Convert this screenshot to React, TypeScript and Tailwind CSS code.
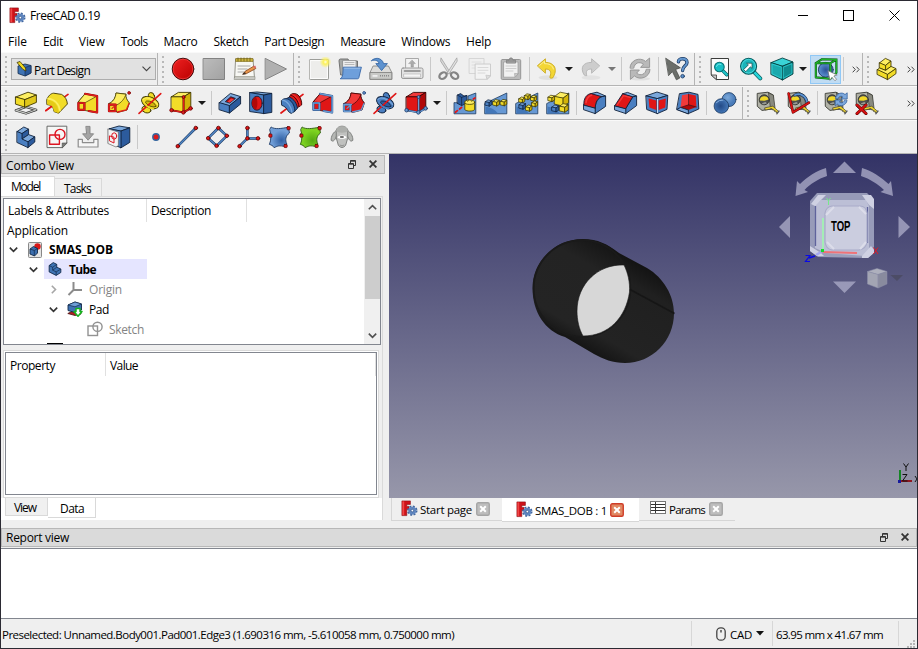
import { useLayoutEffect, useRef, type ReactNode } from "react";

/* ---------- text fitted to a fixed advance width ---------- */
function Label({ w, className = "", children }: { w: number; className?: string; children: string }) {
  const ref = useRef<HTMLSpanElement>(null);
  useLayoutEffect(() => {
    const el = ref.current;
    if (!el) return;
    el.style.letterSpacing = "0px";
    const natural = el.getBoundingClientRect().width;
    el.style.letterSpacing = `${(w - natural) / children.length}px`;
  }, [w, children]);
  return (
    <span ref={ref} className={`inline-block shrink-0 whitespace-pre ${className}`}>
      {children}
    </span>
  );
}

/* ---------- icon helpers ---------- */
const Y = { l: "#fdee62", m: "#f2dc28", d: "#d2b408", s: "#3f3800" };
const B = { l: "#7ba8dc", m: "#4a7fc1", d: "#2c5b9d", s: "#10213c" };
const R = { l: "#f23a3a", m: "#e01616", d: "#b00808", s: "#3a0000" };
type Pal = typeof Y;

function Svg({ children, size = 24 }: { children: ReactNode; size?: number }) {
  return (
    <svg width={size} height={size} viewBox="0 0 24 24" fill="none" strokeLinejoin="round" strokeLinecap="round" className="block shrink-0">
      {children}
    </svg>
  );
}

function Box({ x, y, s, c }: { x: number; y: number; s: number; c: Pal }) {
  const h = s * 0.3;
  return (
    <g stroke={c.s} strokeWidth="0.75">
      <path d={`M${x} ${y + h}L${x + s * 0.4} ${y}L${x + s} ${y + h * 0.4}L${x + s * 0.62} ${y + h * 1.4}Z`} fill={c.l} />
      <path d={`M${x} ${y + h}L${x + s * 0.62} ${y + h * 1.4}V${y + s}L${x} ${y + s * 0.85}Z`} fill={c.m} />
      <path d={`M${x + s * 0.62} ${y + h * 1.4}L${x + s} ${y + h * 0.4}V${y + s * 0.75}L${x + s * 0.62} ${y + s}Z`} fill={c.d} />
    </g>
  );
}

const Dot = ({ x, y, r = 1.8, c = "#e01616", s = "#5c0000" }: { x: number; y: number; r?: number; c?: string; s?: string }) => (
  <circle cx={x} cy={y} r={r} fill={c} stroke={s} strokeWidth="0.8" />
);

/* ---------- application logo ---------- */
const Logo = () => (
  <svg width="17" height="17" viewBox="0 0 17 17" fill="none" className="block shrink-0">
    <path d="M0.9 0.9H9.4V4.4H5.8V6.4H8V9.6H5.8V15.6H0.9Z" fill="#cf1219" stroke="#860b10" strokeWidth="0.6" />
    <path d="M1.4 1.4H3.2V15.2H1.4Z" fill="#ee4646" />
    <circle cx="11.3" cy="10.6" r="3.6" fill="#5f86bf" />
    <circle cx="11.3" cy="10.6" r="4.3" stroke="#41669e" strokeWidth="1.8" strokeDasharray="1.9 1.477" />
    <circle cx="11.3" cy="10.6" r="3.2" stroke="#5f86bf" strokeWidth="1.4" />
    <circle cx="11.3" cy="10.6" r="1.3" fill="#fff" stroke="#34578e" strokeWidth="0.8" />
  </svg>
);

/* ---------- row 1 icons ---------- */
const RecordIcon = () => (
  <Svg>
    <defs><linearGradient id="rec" x1="0" y1="0" x2="1" y2="1"><stop offset="0" stopColor="#f02222" /><stop offset="1" stopColor="#b90000" /></linearGradient></defs>
    <circle cx="12" cy="12" r="10.8" fill="url(#rec)" stroke="#2a0505" strokeWidth="0.9" />
    <circle cx="12" cy="12" r="9.8" stroke="#f24040" strokeWidth="0.7" />
  </Svg>
);
const StopIcon = () => (
  <Svg>
    <defs><linearGradient id="stp" x1="0" y1="0" x2="1" y2="1"><stop offset="0" stopColor="#bcbcbc" /><stop offset="1" stopColor="#a2a2a2" /></linearGradient></defs>
    <rect x="1.5" y="1.5" width="21" height="21" fill="url(#stp)" stroke="#828282" />
  </Svg>
);
const NoteIcon = () => (
  <Svg>
    <path d="M3 2H20L21.5 21H2Z" fill="#f7f7f3" stroke="#8a8a80" strokeWidth="0.9" />
    <path d="M3 1.5H20V4.5H3Z" fill="#c9b23e" stroke="#7c6a18" strokeWidth="0.6" />
    <path d="M5 1v3M8 1v3M11 1v3M14 1v3M17 1v3" stroke="#6b5c10" strokeWidth="0.8" />
    <path d="M5 9H17M5 12H14M5 15H11" stroke="#a8a8a8" strokeWidth="1" />
    <path d="M2 19.6H22V22.5H1.5Z" fill="#c9c9c4" stroke="#8a8a80" strokeWidth="0.6" />
    <path d="M10 17L12 14.4L21 9L22.8 11.5L13.5 16.6Z" fill="#e8964a" stroke="#86431a" strokeWidth="0.8" />
    <path d="M20 9.4L22.2 8.4L23.2 10.6L21.6 11.6Z" fill="#d96a6a" />
    <path d="M10 17L12 15.4L12.4 16.4Z" fill="#222" stroke="#222" strokeWidth="0.5" />
  </Svg>
);
const PlayIcon = () => (
  <Svg><path d="M1.5 1.5L22.5 12L1.5 22.5Z" fill="#b0b0b0" stroke="#858585" /></Svg>
);
const NewIcon = () => (
  <Svg>
    <defs><radialGradient id="glow"><stop offset="0" stopColor="#fffde0" /><stop offset="0.35" stopColor="#fdf25a" /><stop offset="1" stopColor="#fdf25a" stopOpacity="0" /></radialGradient></defs>
    <rect x="2.5" y="2.5" width="19" height="20" rx="0.8" fill="#ededeb" stroke="#9c9d99" />
    <rect x="3.6" y="3.6" width="16.8" height="17.8" stroke="#fff" strokeWidth="0.9" />
    <circle cx="18.4" cy="5" r="6" fill="url(#glow)" />
  </Svg>
);
const OpenIcon = () => (
  <Svg>
    <path d="M1 3.5Q1 2 2.4 2H10L11 4H19.5V18H3Z" fill="#a6a8a6" stroke="#666" strokeWidth="0.9" />
    <path d="M5 3.5H18V12H5Z" fill="#ededed" stroke="#8d8d8d" strokeWidth="0.7" />
    <path d="M7 5.5H16M7 7.5H16" stroke="#aaa" strokeWidth="0.8" />
    <path d="M5.6 10.2H23.4L20.8 20.8Q20.5 21.8 19.4 21.8H2.2Q4.3 21 4.7 18Z" fill="#6e9fdb" stroke="#3767a8" strokeWidth="0.9" />
    <path d="M6.6 11.2H22" stroke="#a9c9ee" strokeWidth="0.8" />
  </Svg>
);
const SaveIcon = () => (
  <Svg>
    <path d="M4.5 9H19.5L22.8 15.5V22.3H1.2V15.5Z" fill="#dcdcda" stroke="#7c7c7a" strokeWidth="0.8" />
    <path d="M1.2 15.5H22.8V22.3H1.2Z" fill="#c8c9c6" stroke="#7c7c7a" strokeWidth="0.8" />
    <path d="M11 18.8H20.5" stroke="#8a8a8a" strokeWidth="1.6" strokeDasharray="1 1" strokeLinecap="butt" />
    <rect x="3.5" y="18" width="5" height="1.8" fill="#eee" />
    <path d="M2.6 3.6C5 0.4 12.6-0.2 14.6 6.6H18.4L12.6 13.6L6.8 6.6H10C9.6 3.8 6.4 2.4 2.6 3.6Z" fill="#5d92cf" stroke="#2f5f9e" strokeWidth="0.8" />
  </Svg>
);
const PrintIcon = () => (
  <Svg>
    <rect x="6" y="1.5" width="12.5" height="11" fill="#f2f2f2" stroke="#a0a0a0" strokeWidth="0.9" />
    <path d="M12.2 3.2L15.4 6.6H13.4V10H11V6.6H9Z" fill="#aaa" stroke="#929292" strokeWidth="0.5" />
    <rect x="1.5" y="11" width="21.5" height="10.5" rx="1.6" fill="#e3e3e3" stroke="#9a9a9a" />
    <path d="M4.5 14H20" stroke="#858585" strokeWidth="1.6" />
    <rect x="4" y="17" width="16.5" height="3.2" fill="#f6f6f6" stroke="#b9b9b9" strokeWidth="0.7" />
  </Svg>
);
const CutIcon = () => (
  <Svg>
    <path d="M4.2 1.2L13.8 16.4L11.8 16.8L3.8 4.4Z" fill="#d8d8d8" stroke="#a2a2a2" strokeWidth="0.8" />
    <path d="M19.6 1.2L10 16.4L12 16.8L20 4.4Z" fill="#e2e2e2" stroke="#a2a2a2" strokeWidth="0.8" />
    <ellipse cx="6" cy="18.6" rx="4" ry="2.9" stroke="#858585" strokeWidth="2.2" transform="rotate(-35 6 18.6)" />
    <ellipse cx="17.6" cy="18.6" rx="4" ry="2.9" stroke="#858585" strokeWidth="2.2" transform="rotate(35 17.6 18.6)" />
  </Svg>
);
const CopyIcon = () => (
  <Svg>
    <g strokeWidth="0.9">
      <rect x="1.5" y="1.5" width="14.5" height="15" fill="#efefef" stroke="#d2d2d2" />
      <path d="M4 5H13M4 8H13M4 11H9" stroke="#dcdcdc" />
      <path d="M7.5 7H22.5V19L19 22.3H7.5Z" fill="#f3f3f3" stroke="#c8c8c8" />
      <path d="M10 10.5H20M10 13.3H20M10 16H17" stroke="#d6d6d6" />
      <path d="M22.5 19L19 22.3L18 18.6Z" fill="#ddd" stroke="#c8c8c8" />
    </g>
  </Svg>
);
const PasteIcon = () => (
  <Svg>
    <rect x="2.2" y="2.5" width="19.5" height="20" rx="1.2" fill="#bababa" stroke="#969696" />
    <path d="M5 5H19V17L16 20.2H5Z" fill="#f1f1f1" stroke="#a2a2a2" strokeWidth="0.8" />
    <path d="M7 9H17M7 11.5H17M7 14H14" stroke="#c9c9c9" strokeWidth="0.9" />
    <path d="M19 17L16 20.2L15.6 16.8Z" fill="#ccc" stroke="#999" strokeWidth="0.6" />
    <path d="M7.5 5.8V3.2H10Q10.3 0.8 12 0.8T14 3.2H16.5V5.8Z" fill="#979797" stroke="#7d7d7d" strokeWidth="0.7" />
  </Svg>
);
const UndoIcon = () => (
  <Svg>
    <ellipse cx="12" cy="20.6" rx="9.5" ry="2.4" fill="#000" opacity="0.06" />
    <path d="M1.6 8.6L9.4 1.8V5.4C18.4 5.4 22.4 12.4 16.6 21C13.6 21.6 13.8 20.6 14 19.4C15.6 15.5 14.6 12 9.4 12V15.8Z" fill="#f3d634" stroke="#c9a91c" strokeWidth="0.9" />
    <path d="M3.6 8.4L8.5 4.2V6.7C13 6.6 16.4 8 17.4 12" stroke="#fdf3a0" strokeWidth="0.9" />
  </Svg>
);
const RedoIcon = () => (
  <Svg>
    <ellipse cx="12" cy="20.6" rx="9.5" ry="2.4" fill="#000" opacity="0.05" />
    <path d="M20.4 8.6L12.6 1.8V5.4C4 5.4 1 10.5 5 17.8Q6.6 19 7.8 18.6C6.6 14.5 7.6 12 12.6 12V15.8Z" fill="#cdcdcd" stroke="#b3b3b3" strokeWidth="0.9" />
  </Svg>
);
const RefreshIcon = () => (
  <Svg>
    <ellipse cx="12" cy="21.8" rx="10" ry="1.8" fill="#000" opacity="0.06" />
    <path d="M2 10.8C2.2 3 12-0.4 17.6 4.4L21.6 1V10.4H12.6L15.4 7.2C11 4 6.5 6.2 5.8 10.8Z" fill="#b9b9b9" stroke="#939393" strokeWidth="0.9" />
    <path d="M22 12.6C21.8 20.4 12 23.6 6.4 19L2.4 22.4V13H11.4L8.6 16.2C13 19.4 17.5 17.2 18.2 12.6Z" fill="#b9b9b9" stroke="#939393" strokeWidth="0.9" />
  </Svg>
);
const WhatsThisIcon = () => (
  <Svg>
    <path d="M13.4 4.8C13.6 0.8 22 0.6 22 5.4C22 9 17.6 8.8 17.6 13.6" stroke="#1b3a64" strokeWidth="3.4" />
    <path d="M13.4 4.8C13.6 0.8 22 0.6 22 5.4C22 9 17.6 8.8 17.6 13.6" stroke="#6396cd" strokeWidth="1.9" />
    <circle cx="17.6" cy="19.2" r="1.8" fill="#5d90c8" stroke="#1b3a64" strokeWidth="0.8" />
    <path d="M1 1.4L15.4 10.8L10.6 12.4L14.8 21L11.4 22.8L7.4 14.6L3.8 18.4Z" fill="#6b6e6a" stroke="#4a4c49" strokeWidth="0.8" />
  </Svg>
);
const FitAllIcon = () => (
  <Svg>
    <path d="M3.5 1.5H20.5V22.5H8.5L3.5 18Z" fill="#fbfbfb" stroke="#3a3c3a" />
    <path d="M3.5 18H8.5V22.5Z" fill="#c9c9c9" stroke="#3a3c3a" strokeWidth="0.8" />
    <path d="M14.5 13.4L18.8 17.8" stroke="#065e60" strokeWidth="3.4" />
    <path d="M14.5 13.4L18.8 17.8" stroke="#1ec4c8" strokeWidth="2.2" />
    <circle cx="11.4" cy="10" r="4.8" fill="#18bfc5" stroke="#067174" strokeWidth="1.1" />
    <path d="M8.4 9.4A3.2 3.2 0 0 1 13 7.4" stroke="#7decee" strokeWidth="1" />
  </Svg>
);
const FitSelIcon = () => (
  <Svg>
    <path d="M15.4 15.4L21.2 21.4" stroke="#0a5a5c" strokeWidth="4" />
    <path d="M15.4 15.4L21.2 21.4" stroke="#26d3d8" strokeWidth="2.7" />
    <circle cx="9.6" cy="9.2" r="8" fill="#19b4ba" stroke="#04595c" strokeWidth="1.1" />
    <circle cx="9.6" cy="9.2" r="6.8" stroke="#4fdade" strokeWidth="0.9" />
    <path d="M4.8 12.4L9.4 7.9L7.6 6.2H13V11.4L11.4 9.8L7 14.4Z" fill="#fff" stroke="#134446" strokeWidth="0.7" />
  </Svg>
);
const IsoIcon = () => (
  <Svg>
    <g stroke="#043f41" strokeWidth="0.9">
      <path d="M1.2 5.6L12.4 1L23 5L12.5 9.2Z" fill="#3ad3d6" />
      <path d="M1.2 5.6L12.5 9.2V23L1.2 17.6Z" fill="#1aa9ad" />
      <path d="M12.5 9.2L23 5V17L12.5 23Z" fill="#0f8b8e" />
    </g>
    <path d="M2.4 7.2L11.4 10V21.2L2.4 16.9Z M13.6 10L21.9 6.7V16.4L13.6 21.2Z" stroke="#35d6da" strokeWidth="0.7" />
  </Svg>
);
const BoundIcon = () => (
  <Svg>
    <defs><radialGradient id="bb"><stop offset="0" stopColor="#2b5299" /><stop offset="1" stopColor="#5e93d2" /></radialGradient></defs>
    <circle cx="11.8" cy="12.8" r="7.4" fill="url(#bb)" stroke="#10264b" strokeWidth="0.8" />
    <g strokeLinecap="square">
      <path d="M1.8 6.2H16.4V21.8L1.8 20.4ZM1.8 6.2L8 2.2L22.4 2.6L16.4 6.2M22.4 2.6V15.8L16.4 21.8" stroke="#0a4a0e" strokeWidth="2.1" />
      <path d="M1.8 6.2H16.4V21.8L1.8 20.4ZM1.8 6.2L8 2.2L22.4 2.6L16.4 6.2M22.4 2.6V15.8L16.4 21.8" stroke="#1db32a" strokeWidth="1.3" />
    </g>
    <path d="M14.2 13.8L23.2 18L19.8 19L22.6 22.4L20.8 23.7L18 20.3L16 23Z" fill="#fff" stroke="#777" strokeWidth="0.7" />
  </Svg>
);
const Steps = ({ c }: { c: Pal }) => (
  <Svg>
    <g stroke={c.s} strokeWidth="0.9">
      <path d="M3.2 6.5L9.8 2L14.6 4.2L8 8.6Z" fill={c.l} />
      <path d="M8 8.6L14.6 4.2V9.6L8 14Z" fill={c.d} />
      <path d="M8 14L14.6 9.6L20.8 11.8L14 16.8Z" fill={c.l} />
      <path d="M14 16.8L20.8 11.8V17L14 22.6Z" fill={c.d} />
      <path d="M3.2 6.5L8 8.6V14L14 16.8V22.6L3.2 17.6Z" fill={c.m} />
    </g>
  </Svg>
);
const PartBlocks = () => (
  <Svg>
    <g stroke={Y.s} strokeWidth="0.85">
      <path d="M4.6 5.8L10.4 1.4L16 4L10.6 8.4Z" fill={Y.l} />
      <path d="M10.6 8.4L16 4V9.4L10.6 13.4Z" fill={Y.m} />
      <path d="M4.6 5.8L10.6 8.4V13.4L4.6 11Z" fill={Y.m} />
      <path d="M2.4 12.6L4.6 11L10.6 13.4L16 9.4L21 11.6L12.6 17.4Z" fill={Y.l} />
      <path d="M2.4 12.6L12.6 17.4V22.6L2.4 17.6Z" fill={Y.m} />
      <path d="M12.6 17.4L21 11.6V16.6L12.6 22.6Z" fill={Y.m} />
    </g>
  </Svg>
);

/* ---------- row 2 icons: additive & subtractive ---------- */
const PadIcon = () => (
  <Svg>
    <path d="M1.8 19.4L12 22.4L22.2 18.8L12 15.8Z" stroke="#333" strokeWidth="2.3" />
    <path d="M1.8 19.4L12 22.4L22.2 18.8L12 15.8Z" stroke="#c7c9c5" strokeWidth="1.1" />
    <g stroke={Y.s} strokeWidth="0.9">
      <path d="M1.8 6L14 1.2L22.4 4L11 8.6Z" fill={Y.l} />
      <path d="M1.8 6L11 8.6V16.2L1.8 13.2Z" fill={Y.m} />
      <path d="M11 8.6L22.4 4V11.4L11 16.2Z" fill="#e0c71a" />
    </g>
  </Svg>
);
const RevolveIcon = () => (
  <Svg>
    <path d="M0.8 19.6L23 3.4" stroke={R.m} strokeWidth="1.7" />
    <path d="M1.8 8.6C3 5.2 5.6 2.4 8.6 2.2L16.6 3.4C20.4 5.6 22 9 22.4 13L13.6 22.2L9 20.6C8.8 17.6 7.4 15.4 5.4 14.2L2.2 13.6Z" fill={Y.m} stroke={Y.s} strokeWidth="0.9" />
    <path d="M9 20.6C8.8 17.6 7.4 15.4 5.4 14.2L2.2 13.6L1.8 8.6C8.6 9 13.4 14 13.6 22.2Z" fill="#e5cb16" />
    <path d="M3 7.6C9.4 8 14.4 13 15 19.8" stroke={Y.l} strokeWidth="1.6" />
    <path d="M0.8 19.6L6.4 15.6" stroke={R.m} strokeWidth="1.7" />
  </Svg>
);
const LoftIcon = ({ c, e, es }: { c: Pal; e: string; es: string }) => (
  <Svg>
    <path d="M2.2 10.8L9 2.8L21.2 5V21.4L9.6 19.6Z" fill={c.m} stroke={c.s} strokeWidth="0.8" />
    <path d="M2.4 10.8L9 2.8L21.2 5L9.6 11.4Z" fill={c.l} stroke={c.s} strokeWidth="0.7" />
    <path d="M9 2.8L21.2 5V21.4L12.6 20" stroke={es} strokeWidth="2" />
    <path d="M9 2.8L21.2 5V21.4L12.6 20" stroke={e} strokeWidth="1.5" />
    <rect x="2.4" y="12" width="6" height="6.8" fill={c.m} stroke={es} strokeWidth="2.2" />
    <rect x="2.4" y="12" width="6" height="6.8" stroke={e} strokeWidth="1.6" />
  </Svg>
);
const SweepIcon = ({ c, e, es }: { c: Pal; e: string; es: string }) => (
  <Svg>
    <path d="M2 12.6C6 11 8.6 7 9 2L19 3.2C18.6 6.6 20 9 22.4 12L20 19L10 21.6L8 18Z" fill={c.m} stroke={c.s} strokeWidth="0.9" />
    <path d="M2 12.6C6 11 8.6 7 9 2L19 3.2C17.4 7.6 15 11.4 9.4 14.2Z" fill={c.l} stroke={c.s} strokeWidth="0.7" />
    <path d="M10.6 21L19.4 18.8L22 12.6" stroke={e} strokeWidth="1.3" />
    <rect x="2" y="13.6" width="6.4" height="6.6" fill={c.m} stroke={es} strokeWidth="2.2" />
    <rect x="2" y="13.6" width="6.4" height="6.6" stroke={e} strokeWidth="1.6" />
    <path d="M5 17.4L9.6 13.4" stroke={e} strokeWidth="1.2" />
    <circle cx="22.1" cy="1.9" r="1.4" fill={e} stroke={es} strokeWidth="0.8" />
  </Svg>
);
const HelixIcon = ({ c }: { c: Pal }) => (
  <Svg>
    <ellipse cx="13.6" cy="5.6" rx="3" ry="4.2" fill={c.m} stroke={c.s} strokeWidth="0.9" transform="rotate(-18 13.6 5.6)" />
    <ellipse cx="8.4" cy="18.6" rx="4.6" ry="3.2" fill={c.m} stroke={c.s} strokeWidth="0.9" transform="rotate(18 8.4 18.6)" />
    <ellipse cx="12.2" cy="11.6" rx="9.2" ry="5.4" fill={c.m} stroke={c.s} strokeWidth="0.9" transform="rotate(24 12.2 11.6)" />
    <ellipse cx="12.8" cy="13" rx="5.6" ry="2.2" fill={c.d} stroke={c.s} strokeWidth="0.7" transform="rotate(24 12.8 13)" />
    <path d="M5 8.4C7 6.2 10.4 7 13 8.2C16 9.6 18.4 11.2 19.6 13.6" stroke={c.l} strokeWidth="1.1" />
    <path d="M1 22.4L22.8 2.6" stroke={R.m} strokeWidth="1.5" />
    <path d="M7.4 13.4C9 15.8 12 17.4 15.4 17.8" stroke={c.m} strokeWidth="1.6" />
  </Svg>
);
const PrimIcon = ({ c, e, es }: { c: Pal; e: string; es: string }) => (
  <Svg>
    <g stroke={c.s} strokeWidth="0.9">
      <path d="M2.4 5.8L9.4 1.4H21.8L14.6 5.8Z" fill={c.l} />
      <path d="M2.4 5.8H14.6V21.4L2.4 19.4Z" fill={c.m} />
      <path d="M14.6 5.8L21.8 1.4V16.8L14.6 21.4Z" fill={c.d} />
    </g>
    <path d="M3 19.4L14.6 21.4L21.6 17.4M14.6 6V21" stroke={es} strokeWidth="1.9" />
    <path d="M3 19.4L14.6 21.4L21.6 17.4M14.6 6V21" stroke={e} strokeWidth="1.2" />
    <Dot x={2.6} y={19.2} c={e} s={es} /><Dot x={14.4} y={21.4} c={e} s={es} /><Dot x={21.6} y={17.4} c={e} s={es} /><Dot x={14.6} y={6} c={e} s={es} r={1.5} />
  </Svg>
);
const PocketIcon = () => (
  <Svg>
    <g stroke={B.s} strokeWidth="0.9">
      <path d="M1.4 11.6L12.4 2.4L22.6 5.6L11.6 14.6Z" fill={B.l} />
      <path d="M1.4 11.6L11.6 14.6V22L1.4 18.8Z" fill={B.m} />
      <path d="M11.6 14.6L22.6 5.6V13L11.6 22Z" fill={B.d} />
      <path d="M7.6 10.4L12.8 5.8L17.4 7.4L12 11.8Z" fill={R.d} />
      <path d="M9.4 10.8L13.2 7.6L16 8.4L12 11.6Z" fill={R.l} stroke="none" />
    </g>
  </Svg>
);
const HoleIcon = () => (
  <Svg>
    <g stroke={B.s} strokeWidth="0.9">
      <path d="M1 1.6L8 1L22.8 2.4L15 4Z" fill={B.l} />
      <path d="M1 1.6L15 4V22.6L1 20.6Z" fill={B.m} />
      <path d="M15 4L22.8 2.4V21.4L15 22.6Z" fill={B.d} />
      <ellipse cx="8" cy="12.2" rx="5.2" ry="7" fill={R.m} />
      <path d="M6.6 5.8C9 8 9 16.6 6.6 18.6C4.4 17.4 3 15.2 3 12.2S4.4 7 6.6 5.8Z" fill={R.d} stroke="none" />
    </g>
  </Svg>
);
const GrooveIcon = () => (
  <Svg>
    <path d="M1 22L8 16.6M17 8L23 3.4" stroke={R.m} strokeWidth="1.7" />
    <g stroke={R.s} strokeWidth="0.9">
      <path d="M10.4 4C12.4 1.6 16.6 2 19 5C21.2 7.8 22 11.4 21.6 14L17 17L8.4 8.6Z" fill={R.m} />
      <path d="M10.8 4C14.6 5 18.4 10 19 15.2" fill="none" />
      <path d="M12 3.6C15.8 4.6 19.6 9.6 20.2 14.6" stroke={R.l} fill="none" />
    </g>
    <g stroke={B.s} strokeWidth="0.9">
      <path d="M6.6 7.4L9.6 6.2C13.8 7.8 17.2 13 17.4 17.4L14.6 20.4Z" fill={B.d} />
      <path d="M1.6 9.4C4 6.6 8 7.2 11 10.2C13.8 13.2 15 17 14.8 20.4L11.2 22.4C9 21.4 8 20.4 7.4 18.6C6.2 16.6 4.4 15.4 2 14.4Z" fill={B.m} />
      <path d="M2.6 9.2C7.6 10 11.2 15.6 12 21.4" stroke={B.l} strokeWidth="1.2" fill="none" />
    </g>
  </Svg>
);

/* ---------- patterns ---------- */
const Ground = () => (
  <g><path d="M1 12.4L22.8 2V22.8H1Z" fill="#6698d4" stroke="#1c3a5f" strokeWidth="0.8" /><path d="M1.5 15.4Q10 17 14 22.4H1.5Z" fill="#4377b8" /></g>
);
const MirrorIcon = () => (
  <Svg>
    <path d="M1 12V22.8H22.8V2L15 5V12Z" fill="#6698d4" stroke="#1c3a5f" strokeWidth="0.8" />
    <path d="M4.4 4L7.6 2.6L11 5L14 4.4V12L8.6 14.6L4.4 12.4Z" fill={B.d} stroke={B.s} strokeWidth="0.8" />
    <path d="M4.4 4L8.6 6.4L13.8 4.6M8.6 6.4V14.4" stroke={B.s} strokeWidth="0.7" />
    <path d="M2.4 21.2L4.4 19.6M6.6 18L8.6 16.4M20.4 8L22 7" stroke={R.m} strokeWidth="1.8" />
    <path d="M11.8 11.4V18.6C13.6 20.6 20 20.6 21.6 18.6V11.4Z" fill={Y.m} stroke={Y.s} strokeWidth="0.8" />
    <ellipse cx="16.7" cy="11.2" rx="4.9" ry="2.2" fill={Y.l} stroke={Y.s} strokeWidth="0.8" />
    <path d="M14.6 10.4C14.6 8.4 18.8 8.4 18.8 10.4" fill={Y.l} stroke={Y.s} strokeWidth="0.7" />
  </Svg>
);
const LinearIcon = () => (
  <Svg><Ground /><Box x={1.4} y={8.8} s={6.4} c={B} /><Box x={9} y={8.6} s={6.4} c={Y} /><Box x={16.4} y={8.4} s={6.4} c={Y} /></Svg>
);
const PolarIcon = () => (
  <Svg><Ground /><Box x={9.6} y={2.8} s={5.8} c={Y} /><Box x={15.8} y={4.4} s={5.8} c={Y} /><Box x={4} y={6} s={5.8} c={Y} /><Box x={16.8} y={10} s={5.8} c={Y} /><Box x={4.2} y={11.8} s={6.4} c={B} /><Box x={10.8} y={14} s={6.2} c={Y} /></Svg>
);
const MultiIcon = () => (
  <Svg><Ground /><Box x={8.6} y={1.2} s={14} c={Y} /><Box x={2.2} y={4.2} s={6.4} c={Y} /><Box x={6} y={14} s={6.8} c={B} /><Box x={13.6} y={12.6} s={8.6} c={Y} /></Svg>
);

/* ---------- dress-up ---------- */
const FilletIcon = () => (
  <Svg>
    <g stroke={B.s} strokeWidth="0.9">
      <path d="M8 2.6L14 1.2L22.6 5L17.6 6Z" fill={B.l} />
      <path d="M12.2 16.6C12.4 11 15 7 19 5.6L22.6 5V15.4L12.2 22.6Z" fill={B.m} />
      <path d="M0.9 13.6L12.2 16.8V22.6L0.9 18.8Z" fill={B.l} />
      <path d="M0.9 13.8V11.4C1.4 6.4 4 3.2 8 2.6L18.6 5.6C14.4 7.2 12.4 11.4 12.2 16.8Z" fill={R.m} />
    </g>
    <path d="M3 11.6C3.6 7.4 5.6 5 8.6 4.2" stroke={R.l} strokeWidth="1.6" />
  </Svg>
);
const ChamferIcon = () => (
  <Svg>
    <g stroke={B.s} strokeWidth="0.9">
      <path d="M8.6 2.8L13.6 1.4L22.6 5L18.8 6Z" fill={B.l} />
      <path d="M11.8 17.4L18.8 5.8L22.6 5V14.6L11.8 22.6Z" fill={B.m} />
      <path d="M0.9 14.6L11.8 17.4V22.6L0.9 19Z" fill={B.l} />
      <path d="M0.9 14.6L8.6 2.8L18.8 5.8L11.8 17.4Z" fill={R.m} />
    </g>
    <path d="M3.4 13.6L9.6 4.6L16 6.4" stroke={R.l} strokeWidth="1.2" />
  </Svg>
);
const DraftIcon = () => (
  <Svg>
    <g stroke={B.s} strokeWidth="0.9">
      <path d="M1.2 4.8L12 1L22.8 4.4L12.4 7.6Z" fill={B.l} />
      <path d="M1.2 4.8L12.4 7.6V22.6L2 18.6Z" fill={B.m} />
      <path d="M12.4 7.6L22.8 4.4L22 18.4L12.4 22.6Z" fill={B.m} />
      <path d="M3.6 7.6L11.4 9.4V19L4.4 16.6Z" fill={R.m} stroke="none" />
      <path d="M13.6 9.4L20.8 7.4L20.2 16.6L13.6 19Z" fill={R.m} stroke="none" />
    </g>
    <path d="M12.5 8.4V21.6" stroke="#c4daf2" strokeWidth="1" />
  </Svg>
);
const ThicknessIcon = () => (
  <Svg>
    <g stroke={B.s} strokeWidth="0.9">
      <path d="M3.8 2.6L13 1.2L22 3.4L22.8 18L12.4 22.6L1 18.4Z" fill={B.m} />
      <path d="M6 4.2L12.6 3V13.8L4.6 16.4Z" fill={R.l} stroke="none" />
      <path d="M12.6 3L19.8 4.6L20.4 16L12.6 13.8Z" fill={R.m} stroke="none" />
      <path d="M4.6 16.4L12.6 13.8L20.4 16L12.4 19Z" fill={R.d} stroke="none" />
      <path d="M12.6 3V13.8L4.6 16.4M12.6 13.8L20.4 16" stroke={R.s} strokeWidth="0.6" fill="none" />
      <path d="M1 18.4L4.6 16.4L12.4 19V22.6Z" fill={B.l} />
    </g>
  </Svg>
);
const BooleanIcon = () => (
  <Svg>
    <defs>
      <radialGradient id="b1" cx="0.4" cy="0.35"><stop offset="0" stopColor="#7ba8d9" /><stop offset="1" stopColor="#4a7cba" /></radialGradient>
      <radialGradient id="b2" cx="0.45" cy="0.5"><stop offset="0" stopColor="#234a86" /><stop offset="1" stopColor="#4376b6" /></radialGradient>
    </defs>
    <circle cx="16" cy="8.6" r="7" fill="url(#b1)" stroke="#1c3a5f" strokeWidth="0.8" />
    <circle cx="8.4" cy="15" r="7.3" fill="url(#b2)" stroke="#1c3a5f" strokeWidth="0.8" />
    <path d="M3.4 11.6Q6 8.8 10 9" stroke="#87b0de" strokeWidth="1" />
  </Svg>
);

/* ---------- measure ---------- */
const Tape = () => (
  <g>
    <path d="M1.6 2.4L12 1.2L17.4 4.2V17.8L6 19.4L1.6 15.6Z" fill="#b0b1a6" stroke="#44453e" strokeWidth="1" />
    <path d="M12.8 2L17.4 4.2L19 17L14.6 18L13.8 12Z" fill="#898a80" stroke="#44453e" strokeWidth="0.8" />
    <circle cx="8.2" cy="8.8" r="5" fill="#4f514f" stroke="#33342f" strokeWidth="0.9" />
    <path d="M3.8 9.6A4.5 4.5 0 0 1 12.6 8.4L8.6 9.8Z" fill="#f0d728" />
    <path d="M5.6 12.4Q8 14.4 11 12.2L9.4 11Z" fill="#9a9c97" />
    <path d="M9 16.8L16.8 15.2L22.6 20.4L21 22L16 17.8L9.4 19Z" fill="#efd62c" stroke="#45412a" strokeWidth="0.7" />
    <path d="M14.6 17.4L20.8 21" stroke="#444" strokeWidth="1.2" strokeDasharray="1 1.2" strokeLinecap="butt" />
    <path d="M20.8 22.8L23 20" stroke="#55575a" strokeWidth="1.3" />
  </g>
);
const MeasLinIcon = () => <Svg><Tape /></Svg>;
const MeasAngIcon = () => (
  <Svg>
    <Tape />
    <path d="M8 4C13 1.6 19 5 20 11" stroke="#17304f" strokeWidth="3" /><path d="M8 4C13 1.6 19 5 20 11" stroke="#5c92d0" strokeWidth="1.8" />
    <path d="M1.6 2.4L6 21.4L22 11.6" stroke="#6e0808" strokeWidth="2.5" /><path d="M1.6 2.4L6 21.4L22 11.6" stroke="#dc1414" strokeWidth="1.6" />
  </Svg>
);
const MeasRefIcon = () => (
  <Svg>
    <Tape />
    <path d="M11.4 7.4C12.4 2 18.4 0.6 21 3.6L23.2 1.8V8H17.2L19 6C17 4.4 14.6 5.4 14 7.8ZM23 9.6C22.4 14.6 16 16 13.4 13.2L11.2 15V9H17.2L15.4 11C17.6 12.6 19.8 11.6 20.4 9.4Z" fill="#7ba7dc" stroke="#38659f" strokeWidth="0.8" />
  </Svg>
);
const MeasClrIcon = () => (
  <Svg>
    <Tape />
    <path d="M2 14L11 22.6M11 14L2 22.6" stroke="#5a0606" strokeWidth="3" /><path d="M2 14L11 22.6M11 14L2 22.6" stroke="#d41010" strokeWidth="2.1" />
  </Svg>
);

/* ---------- row 3 ---------- */
const SketchNewIcon = () => (
  <Svg>
    <path d="M2.4 1.2H21.8V18L17.2 22.6H2.4Z" fill="#f6f6f5" stroke="#5a5c5a" strokeWidth="0.9" />
    <path d="M21.8 18H17.2V22.6Z" fill="#7a7c79" stroke="#4a4c4a" strokeWidth="0.6" />
    <rect x="4.6" y="10" width="9.8" height="9.2" stroke="#dd1420" strokeWidth="1.4" />
    <circle cx="15" cy="9.4" r="5" stroke="#dd1420" strokeWidth="1.4" />
  </Svg>
);
const ImportIcon = () => (
  <Svg>
    <path d="M2.2 14.4H6.4V17.6H17.8V14.4H22V22H2.2Z" fill="#f5f5f5" stroke="#8d8d8d" strokeWidth="1.2" />
    <path d="M10.2 1.4H14V8.8H17.6L12.1 15.2L6.6 8.8H10.2Z" fill="#a4a4a4" stroke="#858585" strokeWidth="0.9" />
  </Svg>
);
const MapSketchIcon = () => (
  <Svg>
    <g stroke={B.s} strokeWidth="0.9">
      <path d="M2.4 3.8L12 1L22.8 2.8L14 6Z" fill={B.l} />
      <path d="M14 6L22.8 2.8V17.4L14 22.8Z" fill={B.d} />
      <path d="M2.4 3.8L14 6V22.8L2.4 18Z" fill={B.m} />
    </g>
    <path d="M1.2 4L11.4 7V20.6L9 22L1.2 18.6Z" fill="#f4f4f4" stroke="#666" strokeWidth="0.7" />
    <path d="M2.8 11L7 12.2V18L2.8 16Z" stroke="#dd1420" strokeWidth="1" />
    <ellipse cx="7.2" cy="11" rx="2.5" ry="3.2" stroke="#dd1420" strokeWidth="1" />
  </Svg>
);
const PointIcon = () => <Svg><circle cx="12" cy="12" r="3.2" fill="#dc1c1c" stroke="#33669f" strokeWidth="1.4" /></Svg>;
const Rod = ({ d }: { d: string }) => (
  <g><path d={d} stroke="#1b3a64" strokeWidth="2.5" /><path d={d} stroke="#5388c6" strokeWidth="1.4" /></g>
);
const LineIcon = () => <Svg><Rod d="M2.8 21.2L20.8 3" /><Dot x={2.8} y={21.2} /><Dot x={20.8} y={3} /></Svg>;
const PlaneIcon = () => (
  <Svg><Rod d="M12.4 3L20.8 10.8L10.6 20.8L2.2 13.2Z" /><Dot x={12.4} y={3} /><Dot x={20.8} y={10.8} /><Dot x={10.6} y={20.8} /><Dot x={2.2} y={13.2} /></Svg>
);
const CsIcon = () => (
  <Svg><Rod d="M10.4 3V13.4H21M10.4 13.4L2.6 21.2" /><Dot x={10.4} y={3} /><Dot x={21} y={13.4} /><Dot x={10.4} y={13.4} /><Dot x={2.6} y={21.2} /></Svg>
);
const BinderIcon = ({ c, d, s, id }: { c: string; d: string; s: string; id: string }) => (
  <Svg>
    <defs><radialGradient id={id} cx="0.6" cy="0.65" r="0.5"><stop offset="0" stopColor={d} /><stop offset="1" stopColor={c} /></radialGradient></defs>
    <path d="M3.4 2.2C7 4.6 13 3.6 20.6 2.2L21.4 8C17.4 11 17 15 18.8 19L17.6 22C11 19.6 9 21.6 6 22.6C5 20.6 3.4 20 1.4 19.4C3.4 15 3.2 9 1.8 5Z" fill={`url(#${id})`} stroke={s} strokeWidth="0.9" />
    {[[20.6, 3.2], [2.4, 10.6], [17.6, 21]].map(([x, y]) => <rect key={x} x={x - 1.6} y={y - 1.6} width="3.2" height="3.2" rx="0.8" fill="#e21818" stroke="#5c0000" strokeWidth="0.7" />)}
  </Svg>
);
const CloneIcon = () => (
  <Svg>
    <g stroke="#7f817f" strokeWidth="1" fill="#b5b7b4">
      <path d="M6.6 5.4C3.4 7 0.8 11.4 1.2 15.4C3.4 17.4 5.4 14.6 6.6 10.6Z" />
      <path d="M17.4 5.4C20.6 7 23.2 11.4 22.8 15.4C20.6 17.4 18.6 14.6 17.4 10.6Z" />
      <path d="M6.2 6C6 3.6 8.6 1.2 12 1.2S18 3.600 17.800 6L17.600 13.400L15.600 20.400Q12 24.600 8.400 20.400L6.400 13.400Z" fill="#c0c1bf" />
      <path d="M6.2 6C7 2.600 9 1.200 12 1.200S17 2.600 17.800 6C16 8.200 8 8.200 6.200 6Z" fill="#adafac" stroke="none" />
    </g>
    <path d="M7.400 12.200C8.400 9.800 15.600 9.800 16.600 12.200C15.600 14.200 8.400 14.200 7.400 12.200Z" fill="#fff" />
    <path d="M10.600 12H13.200" stroke="#444" strokeWidth="1.300" />
    <path d="M10 20.200Q12 21.600 14 20.200" stroke="#868886" strokeWidth="0.800" />
  </Svg>
);

/* ---------- toolbar parts ---------- */
const Cell = ({ children }: { children: ReactNode }) => <div className="w-[31px] shrink-0 pl-1">{children}</div>;
const Sep = () => <div className="flex h-6 w-[6px] shrink-0 justify-center"><div className="w-px bg-[#c9c9c9]" /></div>;
const Arrow = ({ dim = false }: { dim?: boolean }) => (
  <div className="flex w-3 shrink-0 pl-[2px]">
    <svg width="8" height="4" viewBox="0 0 8 4"><path d="M0 0H8L4 4Z" fill={dim ? "#777" : "#1a1a1a"} /></svg>
  </div>
);
const Dots = () => (
  <div className="flex shrink-0 flex-col gap-[3px]">
    {Array.from({ length: 6 }, (_, i) => <div key={i} className="h-[2px] w-[2px] bg-[#b9b9b9]" />)}
  </div>
);
const Handle = () => <div className="flex w-[9px] shrink-0 items-center pl-1"><Dots /></div>;
const Boundary = () => (
  <div className="flex h-full w-3 shrink-0 items-center gap-1 pl-[2px]"><div className="h-full w-px bg-[#b4b4b4]" /><Dots /></div>
);
const More = () => (
  <svg width="8" height="7" viewBox="0 0 8 7" fill="none" className="shrink-0"><path d="M0.7 0.7L3.3 3.5L0.7 6.3M4.5 0.7L7.1 3.5L4.5 6.3" stroke="#444" strokeWidth="1" /></svg>
);
const Row = ({ children }: { children: ReactNode }) => (
  <div className="flex h-[34px] shrink-0 items-center border-t border-b border-t-[#f9f9f9] border-b-[#b4b4b4] bg-[#efefef]">{children}</div>
);

/* ---------- dock parts ---------- */
const DockButtons = () => (
  <div className="ml-auto flex items-center gap-[13px] pr-[7px] pb-px">
    <svg width="8" height="9" viewBox="0 0 8 9" fill="none"><path d="M2.5 3V0.5H7.5V5.5H5.5M2.5 1.2H7.5M0.5 3.5H5.5V8.5H0.5ZM0.5 4.2H5.5" stroke="#333" strokeWidth="1" /></svg>
    <svg width="8" height="8" viewBox="0 0 8 8"><path d="M0.6 0.6L7.4 7.4M7.4 0.6L0.6 7.4" stroke="#333" strokeWidth="1.8" /></svg>
  </div>
);
const Chevron = ({ d, c = "#333" }: { d: "down" | "right" | "up"; c?: string }) => (
  <svg width="9" height="9" viewBox="0 0 9 9" fill="none" className="block shrink-0">
    <path d={d === "down" ? "M0.8 2.6L4.5 6.3L8.2 2.6" : d === "up" ? "M0.8 6.3L4.5 2.6L8.2 6.3" : "M2.8 0.8L6.5 4.5L2.8 8.2"} stroke={c} strokeWidth="1.6" />
  </svg>
);
const CloseBox = ({ hot = false }: { hot?: boolean }) => (
  <svg width="14" height="14" viewBox="0 0 14 14" className="block shrink-0">
    <rect x="0.75" y="0.75" width="12.5" height="12.5" rx="1.5" fill={hot ? "#e08862" : "#bdbdbd"} stroke={hot ? "#cf3d28" : "#a5a5a5"} strokeWidth="1.4" />
    <path d="M4.2 4.2L9.8 9.8M9.8 4.2L4.2 9.8" stroke="#fff" strokeWidth="2" />
  </svg>
);

/* ---------- 3D scene ---------- */
const Scene = () => (
  <svg width="528" height="344" viewBox="389 154 528 344" className="block">
    <defs>
      <linearGradient id="bg" x1="0" y1="0" x2="0" y2="1"><stop offset="0" stopColor="#333366" /><stop offset="1" stopColor="#9797aa" /></linearGradient>
      <linearGradient id="tubeA" gradientUnits="userSpaceOnUse" x1="610" y1="248" x2="560" y2="335"><stop offset="0" stopColor="#161616" /><stop offset="0.25" stopColor="#232323" /><stop offset="0.85" stopColor="#242424" /><stop offset="1" stopColor="#171717" /></linearGradient>
      <linearGradient id="tubeB" gradientUnits="userSpaceOnUse" x1="650" y1="262" x2="595" y2="358"><stop offset="0" stopColor="#0f0f0f" /><stop offset="0.25" stopColor="#202020" /><stop offset="0.8" stopColor="#232323" /><stop offset="1" stopColor="#131313" /></linearGradient>
    </defs>
    <rect x="389" y="154" width="528" height="344" fill="url(#bg)" />
    <path d="M583 239C598 239 607 244 619 253L647 268C664 278 674 296 674 313C674 341 652 363 625 363C613 363 603 359 594 354L565 337C545 331 532.5 312 532.500 288C532.500 261 555 239 583 239Z" fill="url(#tubeB)" />
    <path d="M582 240C604 240 619 250 625 265C600 264 578 281 577 308Q576 325 582 336C553 338 533 315 533 288C533 261 556 240 582 240Z" fill="url(#tubeA)" />
    <circle cx="582" cy="288.500" r="48.300" stroke="#1a1a1a" strokeWidth="1.800" fill="none" />
    <path d="M577 311C577 284 598 264 624 265C628 273 630 282 629.500 292C626 317 609 336 583 336C579 329 577 320 577 311Z" fill="#d7d7d7" stroke="#181818" strokeWidth="0.600" />
    <path d="M630 289.500L674.500 313.500" stroke="#161616" strokeWidth="1.600" />

    <g fill="#a9a9c5" fillOpacity="0.8">
      <path d="M844.5 161.5L856 173H833Z" />
      <path d="M844.5 293L833 281.5H856Z" />
      <path d="M779 227L790 216V238Z" />
      <path d="M910 227L898.500 216V238Z" />
      <path d="M826 168L827 176C818 179 810 184 804.500 190L808 192L795.500 196L797 181L800 184C807 177 816 171 826 168Z" />
      <path d="M862 168L861 176C870 179 878 184 884 190L880.500 192L893 196L891 181L888.500 184C881 177 872 171 862 168Z" />
    </g>
    <path d="M817 193H867L874 200V252L868 258L818 257L810 251V201Z" fill="#a6aac6" fillOpacity="0.85" />
    <path d="M821 200H866L869 206V250L865 256L826 253L815 248V205Z" fill="#bcbfd6" />
    <path d="M862 195H871L874 199V209L869 205Z M811 204L818 195H826L815 206Z M862 256L871 246L874 250V253L868 258H862Z M810 246L821 253L824 256H817L810 251Z" fill="#cfd1e3" />
    <path d="M867.500 207V243M815.500 206V246" stroke="#5f639c" strokeWidth="1.300" fill="none" />
    <path d="M832 206H860Q866 206 867 213V242Q866 249 859 250H832Q826 249 825 242V213Q826 207 832 206Z" fill="#cbcddf" stroke="#a9acc9" strokeWidth="1.200" />
    <path d="M834 207L826 215M859 207L866 214M827 242L834 249M866 242L860 249" stroke="#dcddea" strokeWidth="2" />
    <text x="831" y="231" fontSize="14.500" fontWeight="700" fontFamily="'Liberation Sans', Arial, sans-serif" textLength="19.500" lengthAdjust="spacingAndGlyphs" fill="#000">TOP</text>
    <path d="M823 218V250" stroke="#a4edb6" strokeWidth="2" />
    <path d="M823 252L857 253" stroke="#ef7277" strokeWidth="2.200" />
    <path d="M821 252L816 255" stroke="#a6a8ee" strokeWidth="2.600" /><path d="M815 256L809 258" stroke="#0808e8" strokeWidth="1.600" />
    <rect x="821" y="249" width="3" height="3" fill="#18d82c" />
    <path d="M826.500 198L828.500 201L830.500 198M828.500 201V205" stroke="#76e88a" fill="none" />
    <path d="M873.500 247.500L878 254M878 247.500L873.500 254" stroke="#e51824" />
    <path d="M805.500 255.500H810L805.500 261.500H810" stroke="#0808e8" fill="none" strokeWidth="1.200" />
    <g stroke="#8c8fa8" strokeWidth="0.500">
      <path d="M867.500 271.500L877 268.500L887 271.500L878 274.500Z" fill="#aeb0bd" />
      <path d="M867.500 271.500L878 274.500V288L867.500 284Z" fill="#a3a5b3" />
      <path d="M878 274.500L887 271.500V284L878 288Z" fill="#898b9e" />
    </g>
    <path d="M890.500 275H903L897 281Z" fill="#4c4c66" />
    <path d="M900 470V480" stroke="#158526" strokeWidth="2" /><path d="M900 481H912" stroke="#8f1620" strokeWidth="2" />
    <rect x="898" y="480" width="3" height="3" fill="#161a9c" />
    <path d="M903.500 463.500L906 467L908.500 463.500M906 467V471M902.500 474.500H907L902.500 481H907.500M915 476L917 479L915 482" stroke="#111" fill="none" />
  </svg>
);

/* ---------- tree icons ---------- */
const DocIcon = () => (
  <svg width="14" height="16" viewBox="0 0 14 16"><rect x="0.500" y="0.500" width="13" height="15" rx="1" fill="#e4e4e4" stroke="#888" /><circle cx="9.500" cy="4.500" r="3.200" fill="#d81818" /><path d="M2 7L5.500 4.500L9.500 6.500V11L6.500 14L2 12Z" fill="#3b6eae" stroke="#132a49" strokeWidth="0.900" /><path d="M2 7L6.300 8.500L9.500 6.500M6.300 8.500V14" stroke="#132a49" strokeWidth="0.700" fill="none" /></svg>
);
const BodyTree = () => (
  <svg width="14" height="14" viewBox="0 0 24 24" strokeLinejoin="round"><path d="M2 6L9 1L15 4V9L22 12V18L14 23L2 17Z" fill="#3f73b4" stroke="#132a49" strokeWidth="1.500" /><path d="M2 6L8 9L15 4M8 9V14L14 17L22 12M14 17V23M8 14L15 9" fill="none" stroke="#132a49" strokeWidth="1.200" /></svg>
);
const PadTree = () => (
  <svg width="16" height="16" viewBox="0 0 16 16" strokeLinejoin="round"><path d="M0.800 12.500L6 10H14V13L8 14.500Z" fill="#b02020" stroke="#4a1010" strokeWidth="0.800" /><path d="M1 4L8 1L14.500 3V9L8 11.500L1 9.500Z" fill="#3f72b3" stroke="#132a49" strokeWidth="0.900" /><path d="M1 4L8 1L14.500 3L8 5.800Z" fill="#6f9ed6" stroke="#132a49" strokeWidth="0.700" /><path d="M9 7.500H13V10.500H15L11 15.300L7 10.500H9Z" fill="#fff" stroke="#16b31e" strokeWidth="1.500" /></svg>
);

const menus: [string, number][] = [["File", 19], ["Edit", 20], ["View", 26], ["Tools", 27], ["Macro", 34], ["Sketch", 35], ["Part Design", 60], ["Measure", 45], ["Windows", 49], ["Help", 25]];

export default function App() {
  return (
    <div className="flex h-[649px] w-[918px] flex-col overflow-hidden border border-[#2b2a33] bg-[#efefef] font-['Open_Sans','Noto_Sans',sans-serif] text-[12px] leading-4 text-black">
      {/* title bar */}
      <div className="flex h-[29px] shrink-0 items-center bg-white pl-2">
        <Logo />
        <Label w={70} className="ml-1">FreeCAD 0.19</Label>
        <div className="ml-auto flex items-center gap-[35px] pr-[17px]">
          <div className="h-px w-[10px] bg-black" />
          <div className="h-[11px] w-[11px] border border-black" />
          <svg width="11" height="11" viewBox="0 0 11 11"><path d="M0.500 0.500L10.500 10.500M10.500 0.500L0.500 10.500" stroke="#000" /></svg>
        </div>
      </div>
      {/* menu bar */}
      <div className="flex h-[22px] shrink-0 items-center gap-[15.9px] bg-white pt-[2px] pl-[7px]">
        {menus.map(([t, w]) => <Label key={t} w={w}>{t}</Label>)}
      </div>

      <Row>
        <div className="flex w-[10px] shrink-0 items-center pl-1"><Dots /></div>
        <div className="mr-[-1px] flex h-[22px] w-[145px] shrink-0 items-center border border-[#adadad] bg-[#e1e1e1] pl-1">
          <svg width="16" height="16" viewBox="0 0 16 16" strokeLinejoin="round"><path d="M2 5L9 3L15 4.500V12L9 15L2 12.500Z" fill="#3f73b4" stroke="#132a49" strokeWidth="0.800" /><path d="M9 6.500L15 4.500V12L9 15Z" fill="#2a5797" stroke="#132a49" strokeWidth="0.600" /><path d="M1 1.500L4 0.500L9.500 7L10 10L7 8.500Z" fill="#f0d820" stroke="#3b3505" strokeWidth="0.800" /></svg>
          <Label w={56} className="ml-[2px] pt-[3px]">Part Design</Label>
          <svg width="9" height="6" viewBox="0 0 9 6" fill="none" className="mr-1 ml-auto"><path d="M0.500 0.700L4.500 4.700L8.500 0.700" stroke="#444" strokeWidth="1.100" /></svg>
        </div>
        <Boundary />
        <Cell><RecordIcon /></Cell><Cell><StopIcon /></Cell><Cell><NoteIcon /></Cell><Cell><PlayIcon /></Cell>
        <Boundary />
        <Cell><NewIcon /></Cell><Cell><OpenIcon /></Cell><Cell><SaveIcon /></Cell><Cell><PrintIcon /></Cell>
        <Sep />
        <Cell><CutIcon /></Cell><Cell><CopyIcon /></Cell><Cell><PasteIcon /></Cell>
        <Sep />
        <Cell><UndoIcon /></Cell><Arrow /><Cell><RedoIcon /></Cell><Arrow dim />
        <Sep />
        <Cell><RefreshIcon /></Cell>
        <Sep />
        <Cell><WhatsThisIcon /></Cell>
        <Boundary />
        <Cell><FitAllIcon /></Cell><Cell><FitSelIcon /></Cell><Cell><IsoIcon /></Cell><Arrow />
        <div className="ml-px flex h-[29px] w-[31px] shrink-0 items-center justify-center border border-[#90c8f6] bg-[#c0dcf3]"><BoundIcon /></div>
        <div className="-ml-px"><Sep /></div>
        <div className="flex w-[14px] shrink-0 justify-end"><More /></div>
        <Boundary />
        <div className="-ml-px"><Cell><PartBlocks /></Cell></div>
        <div className="ml-auto pr-[2px]"><More /></div>
      </Row>

      <Row>
        <Handle />
        <Cell><PadIcon /></Cell><Cell><RevolveIcon /></Cell>
        <Cell><LoftIcon c={Y} e="#df1d1d" es="#8a0f0f" /></Cell><Cell><SweepIcon c={Y} e="#df1d1d" es="#8a0f0f" /></Cell>
        <Cell><HelixIcon c={Y} /></Cell><Cell><PrimIcon c={Y} e="#df1d1d" es="#6c0404" /></Cell><Arrow />
        <Sep />
        <Cell><PocketIcon /></Cell><Cell><HoleIcon /></Cell><Cell><GrooveIcon /></Cell>
        <Cell><LoftIcon c={R} e="#6b9bd3" es="#23457a" /></Cell><Cell><SweepIcon c={R} e="#6b9bd3" es="#23457a" /></Cell>
        <Cell><HelixIcon c={B} /></Cell><Cell><PrimIcon c={R} e="#6b9bd3" es="#1c3a66" /></Cell><Arrow />
        <Sep />
        <Cell><MirrorIcon /></Cell><Cell><LinearIcon /></Cell><Cell><PolarIcon /></Cell><Cell><MultiIcon /></Cell>
        <Sep />
        <Cell><FilletIcon /></Cell><Cell><ChamferIcon /></Cell><Cell><DraftIcon /></Cell><Cell><ThicknessIcon /></Cell>
        <Sep />
        <Cell><BooleanIcon /></Cell>
        <Boundary />
        <Cell><MeasLinIcon /></Cell><Cell><MeasAngIcon /></Cell>
        <Sep />
        <Cell><MeasRefIcon /></Cell><Cell><MeasClrIcon /></Cell>
        <div className="ml-auto pr-[2px]"><More /></div>
      </Row>

      <Row>
        <Handle />
        <Cell><Steps c={B} /></Cell><Cell><SketchNewIcon /></Cell><Cell><ImportIcon /></Cell><Cell><MapSketchIcon /></Cell>
        <Sep />
        <Cell><PointIcon /></Cell><Cell><LineIcon /></Cell><Cell><PlaneIcon /></Cell><Cell><CsIcon /></Cell>
        <Cell><BinderIcon c="#719fd8" d="#2f5fa3" s="#1c3a66" id="bn1" /></Cell>
        <Cell><BinderIcon c="#7ed321" d="#55a812" s="#2c5c0c" id="bn2" /></Cell>
        <Cell><CloneIcon /></Cell>
      </Row>

      {/* main area */}
      <div className="flex h-[374px] shrink-0">
        <div className="flex w-[388px] shrink-0 flex-col pt-px">
          <div className="flex h-[19px] w-[384px] shrink-0 items-center border border-[#b8b8b8] bg-[#dadada] pl-1">
            <Label w={68} className="pt-[2px]">Combo View</Label>
            <DockButtons />
          </div>
          <div className="flex h-[22px] items-end pt-[2px]">
            <div className="flex h-5 w-[54px] items-center border-t border-r border-[#dcdcdc] bg-white pl-[10px]"><Label w={29}>Model</Label></div>
            <div className="flex h-[18px] w-[47px] items-center border-t border-r border-[#d9d9d9] bg-[#f0f0f0] pt-[2px] pl-[9px]"><Label w={27}>Tasks</Label></div>
          </div>
          <div className="flex h-[324px] w-[382px] shrink-0 flex-col border-t border-r border-b border-[#dadada] pt-px pl-[2px]">
            {/* model tree */}
            <div className="flex h-[147px] w-[378px] shrink-0 border border-[#82868f] bg-white">
              <div className="flex flex-1 flex-col">
                <div className="flex h-[23px] shrink-0 items-center">
                  <div className="flex h-full w-[143px] items-center border-r border-[#e0e0e0] pt-px pl-1"><Label w={101}>Labels &amp; Attributes</Label></div>
                  <div className="flex h-full w-[100px] items-center border-r border-[#e0e0e0] pt-px pl-1"><Label w={60}>Description</Label></div>
                </div>
                <div className="flex h-[18px] shrink-0 items-center pl-[3px]"><Label w={61}>Application</Label></div>
                <div className="flex h-[19px] shrink-0 items-center pl-[5px]"><Chevron d="down" /><div className="ml-[10px]"><DocIcon /></div><Label w={64} className="ml-[7px] pt-px font-bold">SMAS_DOB</Label></div>
                <div className="flex h-[20px] shrink-0 items-center pl-[25px]">
                  <Chevron d="down" />
                  <div className="ml-[6px] flex h-full w-[103px] items-center bg-[#e5e5ff] pl-1"><BodyTree /><Label w={27} className="ml-[7px] pt-[2px] font-bold">Tube</Label></div>
                </div>
                <div className="flex h-[20px] shrink-0 items-center pl-[45px] text-[#848484]">
                  <Chevron d="right" c="#a6a6a6" />
                  <svg width="16" height="16" viewBox="0 0 16 16" className="ml-[9px]"><path d="M6.500 1V9H15M6.500 9L1.500 14" fill="none" stroke="#8b8b8b" strokeWidth="2" /></svg>
                  <Label w={33} className="ml-[6px] pt-[2px]">Origin</Label>
                </div>
                <div className="flex h-[20px] shrink-0 items-center pl-[45px]"><Chevron d="down" /><div className="ml-[9px]"><PadTree /></div><Label w={20} className="ml-[6px] pt-[2px]">Pad</Label></div>
                <div className="flex h-[20px] shrink-0 items-center pl-[83px] text-[#848484]">
                  <svg width="16" height="16" viewBox="0 0 16 16" fill="none" stroke="#929292" strokeWidth="1.400"><rect x="1" y="5" width="9.500" height="9.500" /><circle cx="10.500" cy="5.800" r="4.600" /></svg>
                  <Label w={35} className="ml-[6px] pt-[2px]">Sketch</Label>
                </div>
                <div className="mt-auto ml-[43px] h-px w-4 bg-black" />
              </div>
              <div className="flex w-4 shrink-0 flex-col items-center bg-[#f0f0f0] pt-1">
                <Chevron d="up" c="#505050" />
                <div className="mt-1 h-[83px] w-[15px] bg-[#cdcdcd]" />
                <div className="mt-auto pb-1"><Chevron d="down" c="#505050" /></div>
              </div>
            </div>
            {/* property editor */}
            <div className="mt-[5px] flex h-[148px] w-[376px] shrink-0 border border-[#dadada] bg-white p-px pb-[2px]">
              <div className="flex flex-1 border border-[#82868f]">
                <div className="flex h-[23px] w-[100px] items-center border-r border-[#e0e0e0] pt-[2px] pl-1"><Label w={45}>Property</Label></div>
                <div className="flex h-[23px] w-[270px] items-center border-r border-[#e0e0e0] pt-[2px] pl-1"><Label w={28}>Value</Label></div>
              </div>
            </div>
            <div className="ml-[-2px] flex h-[22px] shrink-0 items-start bg-white pl-1">
              <div className="flex h-[18px] w-[43px] items-center border-r border-b border-l border-[#d9d9d9] bg-[#f0f0f0] pt-[2px] pl-2"><Label w={22}>View</Label></div>
              <div className="flex h-5 w-[48px] items-center border-r border-b border-[#d9d9d9] bg-white pt-[2px] pl-3"><Label w={24}>Data</Label></div>
            </div>
          </div>
        </div>

        <div className="flex w-[528px] flex-col">
          <Scene />
          <div className="flex h-6 items-start pl-[2px] text-[11.5px]">
            <div className="flex h-[23px] w-[111px] items-center border-b border-l border-[#d6d6d6] pb-px pl-[9px]"><Logo /><Label w={52} className="ml-[2px] pt-[3px]">Start page</Label><div className="ml-1"><CloseBox /></div></div>
            <div className="flex h-6 w-[137px] items-center border-b border-[#d6d6d6] bg-white pl-[14px]"><Logo /><Label w={72} className="ml-[2px] pt-[2px]">SMAS_DOB : 1</Label><div className="ml-[3px]"><CloseBox hot /></div></div>
            <div className="flex h-[23px] w-[96px] items-center border-b border-[#d6d6d6] pb-px pl-[11px]">
              <svg width="16" height="14" viewBox="0 0 16 14" fill="none" stroke="#444" className="mb-[2px]"><rect x="0.500" y="0.500" width="15" height="12" fill="#fff" stroke="#777" /><path d="M1 3.500H15M1 6.500H15M1 9.500H15M5.500 1V12" stroke="#333" /></svg>
              <Label w={36} className="ml-[3px] pt-[3px]">Params</Label><div className="ml-1"><CloseBox /></div>
            </div>
          </div>
        </div>
      </div>

      {/* report view */}
      <div className="flex h-[19px] shrink-0 items-center border border-[#b8b8b8] bg-[#dadada] pl-1">
        <Label w={63}>Report view</Label>
        <DockButtons />
      </div>
      <div className="mt-px h-[71px] shrink-0 border-t border-b border-[#82868f] bg-white" />
      {/* status bar */}
      <div className="flex flex-1 items-center text-[11.5px]">
        <Label w={452} className="ml-px pt-[2px]">Preselected: Unnamed.Body001.Pad001.Edge3 (1.690316 mm, -5.610058 mm, 0.750000 mm)</Label>
        <div className="ml-auto flex h-full items-center">
          <div className="h-[25px] w-px bg-[#d7d7d7]" />
          <svg width="10" height="14" viewBox="0 0 10 14" fill="none" className="ml-6"><rect x="0.800" y="0.800" width="8.400" height="12.400" rx="3.800" stroke="#444" strokeWidth="1.300" /><path d="M5 3V5.500" stroke="#444" strokeWidth="1.400" /></svg>
          <Label w={22} className="ml-1 pt-[2px]">CAD</Label>
          <svg width="8" height="5" viewBox="0 0 8 5" className="ml-[4px]"><path d="M0 0H8L4 4.500Z" fill="#111" /></svg>
          <div className="ml-2 h-[25px] w-px bg-[#d7d7d7]" />
          <Label w={107} className="ml-[3px] pt-[2px]">63.95 mm x 41.67 mm</Label>
          <div className="ml-[15px] h-[25px] w-px bg-[#d7d7d7]" />
          <svg width="8" height="8" viewBox="0 0 8 8" className="mr-[2px] ml-2 self-end" fill="#b5b5b5"><path d="M6 0H8V2H6ZM3 3H5V5H3ZM6 3H8V5H6ZM0 6H2V8H0ZM3 6H5V8H3ZM6 6H8V8H6Z" /></svg>
        </div>
      </div>
    </div>
  );
}
